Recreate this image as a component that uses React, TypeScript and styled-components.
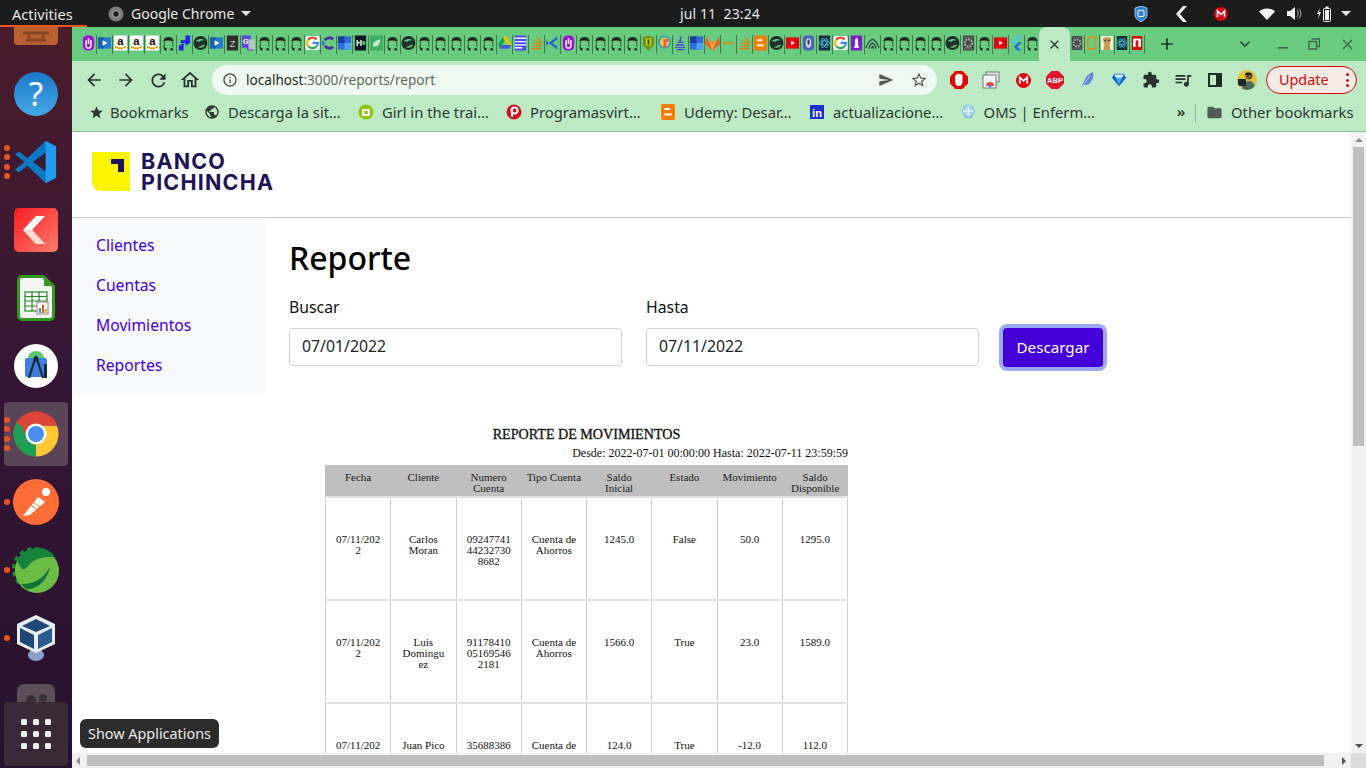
import React from 'react';
import styled, { createGlobalStyle } from 'styled-components';
import {
  MdArrowBack,
  MdArrowForward,
  MdRefresh,
  MdOutlineHome,
  MdInfoOutline,
  MdSend,
  MdStarBorder,
  MdStar,
  MdExtension,
  MdClose,
  MdAdd,
  MdExpandMore,
  MdPublic,
  MdFolder,
  MdQueueMusic,
} from 'react-icons/md';

const GlobalStyle = createGlobalStyle`
  html, body {
    margin: 0;
    padding: 0;
    height: 100%;
    overflow: hidden;
    background: #fff;
  }
  #root { height: 100%; }
  * { box-sizing: border-box; }
`;

const uiFont = `"Noto Sans", "Open Sans", sans-serif`;

const Desktop = styled.div`
  position: relative;
  width: 1366px;
  height: 768px;
  display: flex;
  flex-direction: column;
  overflow: hidden;
  font-family: ${uiFont};
`;

/* ---------- gnome top bar ---------- */

const TopBar = styled.div`
  height: 27px;
  flex: none;
  display: flex;
  align-items: center;
  background: #1c1c1c;
  color: #e6e6e6;
  font-size: 14px;
`;

const Activities = styled.div`
  width: 87px;
  height: 27px;
  padding: 2px 0 0 12px;
  display: flex;
  align-items: center;
  border-bottom: 2px solid #e95420;
  font-size: 14.6px;
`;

const AppMenu = styled.div`
  width: 593px;
  padding-left: 21px;
  display: flex;
  align-items: center;
  gap: 7px;
`;

const Caret = styled.span`
  width: 0;
  height: 0;
  border-left: 5px solid transparent;
  border-right: 5px solid transparent;
  border-top: 5px solid #e6e6e6;
`;

const Clock = styled.div`
  width: 439px;
  white-space: pre;
  letter-spacing: 0.1px;
`;

const Tray = styled.div`
  display: flex;
  align-items: center;
`;

const TraySlot = styled.div<{ $w: number; $ml?: number }>`
  width: ${(p) => p.$w}px;
  margin-left: ${(p) => p.$ml ?? 0}px;
  height: 27px;
  display: flex;
  align-items: center;
  justify-content: center;
`;

/* ---------- dock ---------- */

const Workspace = styled.div`
  flex: 1;
  min-height: 0;
  display: flex;
`;

const Dock = styled.div`
  width: 72px;
  flex: none;
  display: flex;
  flex-direction: column;
  background: linear-gradient(180deg, #4a1c2b 0%, #351634 45%, #27122d 100%);
`;

const DockClip = styled.div`
  flex: 1;
  min-height: 0;
  overflow: hidden;
`;

const DockList = styled.div`
  display: flex;
  flex-direction: column;
  margin-top: -35px;
`;

const DockItem = styled.div<{ $active?: boolean }>`
  position: relative;
  height: 64px;
  flex: none;
  margin: 2px 4px;
  display: flex;
  align-items: center;
  justify-content: center;
  border-radius: 4px;
  background: ${(p) => (p.$active ? '#5a4458' : 'transparent')};
`;

const RunDots = styled.div`
  position: absolute;
  left: 0;
  top: 0;
  bottom: 0;
  display: flex;
  flex-direction: column;
  justify-content: center;
  gap: 3.5px;
`;

const RunDot = styled.span`
  width: 6px;
  height: 6px;
  border-radius: 50%;
  background: #e95420;
`;

const ShowApps = styled.div`
  height: 64px;
  flex: none;
  margin: 0 4px 2px;
  border-radius: 4px;
  background: #3a2a38;
  display: grid;
  grid-template-columns: repeat(3, 6px);
  grid-auto-rows: 6px;
  gap: 6px;
  justify-content: center;
  align-content: center;
`;

const AppDot = styled.span`
  background: #eeeeee;
  border-radius: 1.5px;
`;

const Tooltip = styled.div`
  position: absolute;
  left: 80px;
  top: 719px;
  height: 29px;
  width: 139px;
  display: flex;
  align-items: center;
  justify-content: center;
  border-radius: 6px;
  background: #2c2c2c;
  color: #e8e8e8;
  font-size: 14.4px;
`;

/* ---------- chrome window ---------- */

const Browser = styled.div`
  flex: 1;
  min-width: 0;
  display: flex;
  flex-direction: column;
`;

const TabStrip = styled.div`
  height: 34px;
  flex: none;
  display: flex;
  align-items: stretch;
  padding-left: 8.5px;
  background: #68cb80;
  color: #26332a;
`;

const Tab = styled.div<{ $w?: number }>`
  width: ${(p) => p.$w ?? 16}px;
  flex: none;
  height: 19px;
  margin-top: 8px;
  display: flex;
  align-items: flex-start;
  justify-content: center;
  overflow: hidden;
  border-right: 1px solid #3f7d50;
`;

const ActiveTab = styled.div`
  width: 31px;
  flex: none;
  margin-left: -2px;
  border-radius: 8px 8px 0 0;
  background: #bdeac5;
  display: flex;
  align-items: center;
  justify-content: center;
`;

const StripButton = styled.div<{ $w: number; $ml?: number }>`
  width: ${(p) => p.$w}px;
  margin-left: ${(p) => p.$ml ?? 0}px;
  flex: none;
  display: flex;
  align-items: center;
  justify-content: center;
`;

const Toolbar = styled.div`
  height: 38px;
  flex: none;
  display: flex;
  align-items: flex-start;
  padding: 4px 0 0 6px;
  background: #bdeac5;
  color: #26332a;
`;

const ToolButton = styled.div<{ $w?: number }>`
  width: ${(p) => p.$w ?? 32}px;
  height: 30px;
  flex: none;
  display: flex;
  align-items: center;
  justify-content: center;
`;

const Omnibox = styled.div`
  width: 725px;
  height: 30px;
  flex: none;
  margin: 0 6px;
  display: flex;
  align-items: center;
  border-radius: 15px;
  background: #effaf1;
  padding: 0 2px 0 10px;
  font-size: 13.6px;
`;

const Url = styled.div`
  flex: 1;
  margin-left: 8px;
  padding-bottom: 2px;
  color: #5d6b62;

  b {
    font-weight: 400;
    color: #1f2a23;
  }
`;

const OmniAction = styled.div`
  width: 33px;
  display: flex;
  justify-content: center;
  color: #4d5a51;
`;

const UpdatePill = styled.div`
  width: 91px;
  height: 28px;
  flex: none;
  margin: 1px 0 0 3px;
  padding: 0 7px 2px 12px;
  display: flex;
  align-items: center;
  justify-content: space-between;
  border: 1px solid #d40c0c;
  border-radius: 14px;
  background: #f4ebe4;
  color: #d40c0c;
  font-size: 14.4px;
`;

const PillDots = styled.div`
  display: flex;
  flex-direction: column;
  gap: 2.5px;
  padding-top: 2px;
`;

const PillDot = styled.span`
  width: 3px;
  height: 3px;
  border-radius: 50%;
  background: #d40c0c;
`;

const Avatar = styled.div`
  width: 20px;
  height: 20px;
  border-radius: 50%;
  overflow: hidden;
  background: #e2c33c;
`;

const BookmarkBar = styled.div`
  height: 33px;
  flex: none;
  display: flex;
  align-items: flex-start;
  padding: 3px 0 0 17px;
  background: #bdeac5;
  border-bottom: 1px solid #8fc79c;
  color: #2d3a32;
  font-size: 14.8px;
`;

const Bookmark = styled.div<{ $w: number; $gap?: number }>`
  width: ${(p) => p.$w}px;
  height: 20px;
  flex: none;
  display: flex;
  align-items: center;
  gap: ${(p) => p.$gap ?? 8}px;
  white-space: nowrap;
`;

const BookmarkSpacer = styled.div`
  width: 75px;
  flex: none;
`;

const Chevrons = styled.div`
  width: 22px;
  height: 20px;
  flex: none;
  text-align: center;
  font-size: 15px;
  line-height: 18px;
  font-weight: 600;
`;

const BarDivider = styled.div`
  width: 1px;
  height: 18px;
  margin: 2px 10px 0 3px;
  flex: none;
  background: #93b79b;
`;

/* ---------- page inside the browser ---------- */

const Viewport = styled.div`
  flex: 1;
  min-height: 0;
  display: flex;
`;

const PageColumn = styled.div`
  flex: 1;
  min-width: 0;
  display: flex;
  flex-direction: column;
`;

const Page = styled.div`
  flex: 1;
  min-height: 0;
  overflow: hidden;
  background: #fff;
`;

const Header = styled.div`
  height: 86px;
  padding: 20px 0 0 20px;
  display: flex;
  align-items: flex-start;
  gap: 11px;
  border-bottom: 1px solid #cdcdc5;
`;

const LogoMark = styled.div`
  position: relative;
  width: 38px;
  height: 39px;
  background: #fbf600;
  border-bottom-left-radius: 9px;
`;

const LogoCorner = styled.svg`
  position: absolute;
  left: 19px;
  top: 7px;
`;

const LogoText = styled.div`
  margin-top: -1px;
  color: #1e1259;
  font-family: "Inter", ${uiFont};
  font-size: 21.5px;
  font-weight: 700;
  line-height: 21px;
  letter-spacing: 1.2px;
`;

const PageBody = styled.div`
  display: flex;
  align-items: flex-start;
`;

const Sidebar = styled.nav`
  width: 193px;
  height: 176px;
  flex: none;
  padding: 8px 0 0 24px;
  background: #f8f9fa;
`;

const NavLink = styled.a`
  display: block;
  height: 40px;
  line-height: 38px;
  color: #3f00e6;
  font-size: 15.7px;
  text-decoration: none;
`;

const Content = styled.main`
  flex: 1;
  min-width: 0;
  padding: 20px 0 0 24px;
`;

const Title = styled.h1`
  margin: 0;
  height: 40px;
  font-size: 32px;
  line-height: 40px;
  font-weight: 500;
  color: #000;
`;

const FormRow = styled.div`
  display: flex;
  align-items: flex-end;
  gap: 24px;
  margin-top: 18px;
`;

const Field = styled.div`
  width: 333px;
`;

const Label = styled.label`
  display: block;
  height: 24px;
  margin-bottom: 8px;
  font-size: 15.8px;
  line-height: 22px;
  color: #111;
`;

const DateInput = styled.input`
  display: block;
  width: 100%;
  height: 38px;
  padding: 0 12px 2px;
  border: 1px solid #ced4da;
  border-radius: 4px;
  background: #fff;
  color: #212529;
  font-family: inherit;
  font-size: 15.8px;
  outline: none;
`;

const DownloadButton = styled.button`
  width: 100px;
  height: 39px;
  margin-bottom: -1px;
  padding: 0 0 2px;
  border: none;
  border-radius: 4px;
  background: #4400d8;
  box-shadow: 0 0 0 4px #9ba9f8;
  color: #fff;
  font-family: inherit;
  font-size: 15.2px;
`;

const Report = styled.section`
  width: 523px;
  margin: 58px 0 0 36px;
  font-family: "Liberation Serif", "Times New Roman", serif;
  color: #111;
`;

const ReportTitle = styled.div`
  height: 21px;
  text-align: center;
  font-size: 14.1px;
  line-height: 20px;
  -webkit-text-stroke: 0.3px #111;
`;

const ReportRange = styled.div`
  height: 20px;
  text-align: right;
  font-size: 12px;
  line-height: 16px;
`;

const ReportTable = styled.table`
  width: 523px;
  table-layout: fixed;
  border-collapse: collapse;
  font-size: 11px;
  line-height: 11px;
  text-align: center;
`;

const HeadCell = styled.th`
  height: 32px;
  padding: 7px 4.5px 0;
  vertical-align: top;
  background: #bfbfbf;
  border-left: 1px solid #bfbfbf;
  font-weight: 400;
  color: #222;
`;

const BodyCell = styled.td`
  height: 103px;
  padding: 36px 9px 0;
  vertical-align: top;
  border: 1px solid #d0d0d0;
  border-top: 2px solid #e2e2e2;
  border-bottom: 2px solid #e2e2e2;
  overflow-wrap: anywhere;
`;

/* ---------- scrollbars ---------- */

const HScroll = styled.div`
  height: 15px;
  flex: none;
  display: flex;
  align-items: center;
  background: #f1f1f1;
  padding-left: 4px;
`;

const HThumb = styled.div`
  flex: none;
  width: 1237px;
  height: 11px;
  margin-left: 7px;
  background: #bfbfbf;
`;

const ArrowLeft = styled.span`
  width: 0;
  height: 0;
  border-top: 4px solid transparent;
  border-bottom: 4px solid transparent;
  border-right: 4px solid #8d8d8d;
`;

const ArrowRight = styled.span`
  width: 0;
  height: 0;
  margin-left: 18px;
  border-top: 4px solid transparent;
  border-bottom: 4px solid transparent;
  border-left: 4px solid #505050;
`;

const VScroll = styled.div`
  width: 15px;
  flex: none;
  display: flex;
  flex-direction: column;
  align-items: center;
  background: #f1f1f1;
`;

const ArrowUp = styled.span`
  margin-top: 6px;
  width: 0;
  height: 0;
  border-left: 4px solid transparent;
  border-right: 4px solid transparent;
  border-bottom: 4px solid #8d8d8d;
`;

const VThumb = styled.div`
  width: 11px;
  flex: 1;
  margin-top: 5px;
  background: #bfbfbf;
  max-height: 520px;
`;

const VGap = styled.div`
  flex: 1;
`;

const ArrowDown = styled.span`
  margin-bottom: 5px;
  width: 0;
  height: 0;
  border-left: 4px solid transparent;
  border-right: 4px solid transparent;
  border-top: 4px solid #505050;
`;

const Corner = styled.div`
  width: 15px;
  height: 15px;
  flex: none;
  background: #dcdcdc;
`;

/* ---------- favicons ---------- */

const Github = () => (
  <svg width="16" height="16" viewBox="0 0 16 16">
    <path d="M2.500 6C3 3 5 1.500 8 1.500S13 3 13.500 6c-3-1-8-1-11 0z" fill="#1c2a24" />
    <path d="M3.500 6v6M12.500 6v6" stroke="#2f5a3e" strokeWidth="1" />
    <path d="M2.500 10.500c.5 2 2 3 3.500 3V16H4.500C3 15.500 2.500 13 2.500 10.500zM10 13.500h3V16h-3z" fill="#1c2a24" />
  </svg>
);

const Favicon = ({ kind }: { kind: string }) => {
  switch (kind) {
    case 'gh':
      return <Github />;
    case 'u':
      return (
        <svg width="16" height="16" viewBox="0 0 16 16">
          <rect x="2" y="0" width="12" height="16" rx="5" fill="#a50be0" />
          <path d="M5.500 5v6a2.500 2.500 0 0 0 5 0V5" stroke="#fff" strokeWidth="1.600" fill="none" />
          <rect x="7.200" y="3" width="1.600" height="6" fill="#fff" />
        </svg>
      );
    case 'play':
      return (
        <svg width="16" height="16" viewBox="0 0 16 16">
          <rect x="1" y="2" width="14" height="12" fill="#2a78cf" />
          <rect x="1" y="2" width="6" height="12" fill="#1c5fae" />
          <path d="M6 5l5 3-5 3z" fill="#fff" />
        </svg>
      );
    case 'amazon':
      return (
        <svg width="16" height="16" viewBox="0 0 16 16">
          <rect x="1" y="0" width="14" height="16" fill="#fff" />
          <text x="8" y="10" textAnchor="middle" fontSize="12" fontWeight="700" fontFamily="Liberation Sans, sans-serif" fill="#111">a</text>
          <path d="M2 12c3 2 8 2 12 0" stroke="#f29a12" strokeWidth="1.800" fill="none" />
        </svg>
      );
    case 'flag':
      return (
        <svg width="16" height="16" viewBox="0 0 16 16">
          <path d="M9 0h5v5H9zM4 5h10v3l-5 3v-3H4zM2 11l5-3v8H2z" fill="#2222e8" />
        </svg>
      );
    case 'globe':
      return (
        <svg width="16" height="16" viewBox="0 0 16 16">
          <circle cx="8" cy="8" r="7.500" fill="#21302a" />
          <path d="M3 6c3-3 7-3 9-1-2 0-4 .5-5 1.500zM13 10c-2 3-6 4-8 2 3 0 4-1 5-2z" fill="#68cb80" />
        </svg>
      );
    case 'z':
      return (
        <svg width="16" height="16" viewBox="0 0 16 16">
          <rect x="2" y="0" width="12" height="16" fill="#2e2e2e" />
          <text x="8" y="12" textAnchor="middle" fontSize="10" fontFamily="Liberation Sans, sans-serif" fill="#cfcfcf">Z</text>
        </svg>
      );
    case 'translate':
      return (
        <svg width="16" height="16" viewBox="0 0 16 16">
          <path d="M1 0h9l4 16H7l-1-3H1z" fill="#5a46e8" />
          <rect x="8" y="4" width="7" height="11" fill="#b7c3bb" />
          <text x="5" y="9" textAnchor="middle" fontSize="8" fontWeight="700" fontFamily="Liberation Sans, sans-serif" fill="#fff">G</text>
        </svg>
      );
    case 'google':
      return (
        <svg width="16" height="16" viewBox="0 0 16 16">
          <rect x="0.500" y="0.500" width="15" height="15" rx="2" fill="#fff" />
          <path d="M12.500 4.200A6 6 0 0 0 3.300 4.700" stroke="#ea4335" strokeWidth="2.400" fill="none" />
          <path d="M3.300 4.700a6 6 0 0 0 0 6.600" stroke="#fbbc05" strokeWidth="2.400" fill="none" />
          <path d="M3.300 11.300A6 6 0 0 0 12.800 11" stroke="#34a853" strokeWidth="2.400" fill="none" />
          <path d="M8 7.800h5.700c0 1.300-.3 2.300-.9 3.200" stroke="#4285f4" strokeWidth="2.400" fill="none" />
        </svg>
      );
    case 'c':
      return (
        <svg width="16" height="16" viewBox="0 0 16 16">
          <path d="M13 4a6 6 0 0 0-9 1M4 11a6 6 0 0 0 9 1" stroke="#4b2fa6" strokeWidth="3" fill="none" />
          <path d="M1 5l4 3-4 3z" fill="#3b6ce0" />
        </svg>
      );
    case 'bsq':
      return (
        <svg width="16" height="16" viewBox="0 0 16 16">
          <rect x="1" y="1" width="14" height="14" fill="#2f6ae0" />
          <rect x="1" y="1" width="7" height="7" fill="#1a3f9e" />
          <rect x="8" y="8" width="7" height="7" fill="#50a0f5" />
        </svg>
      );
    case 'hn':
      return (
        <svg width="16" height="16" viewBox="0 0 16 16">
          <rect x="2" y="0" width="12" height="16" fill="#0c1322" />
          <text x="6.500" y="11" textAnchor="middle" fontSize="9" fontWeight="700" fontFamily="Liberation Sans, sans-serif" fill="#fff">H</text>
          <rect x="10" y="6" width="3" height="4" fill="#32d67c" />
        </svg>
      );
    case 'leaf':
      return (
        <svg width="16" height="16" viewBox="0 0 16 16">
          <rect x="1" y="0" width="14" height="16" fill="#3fae63" />
          <path d="M4 12c0-5 3-7 8-8 0 5-2 8-7 8" fill="#bfe8cb" />
        </svg>
      );
    case 'drive':
      return (
        <svg width="16" height="16" viewBox="0 0 16 16">
          <path d="M6 1h4l5 9h-4z" fill="#f2c200" />
          <path d="M6 1l-5 9 2 4 5-9z" fill="#17a05d" />
          <path d="M3 14l2-4h10l-2 4z" fill="#4a55e0" />
        </svg>
      );
    case 'lines':
      return (
        <svg width="16" height="16" viewBox="0 0 16 16">
          <rect x="2" y="0" width="12" height="16" fill="#4b4bf0" />
          <path d="M2 3h12M2 6.500h12M2 10h12M2 13h8" stroke="#fff" strokeWidth="1.500" />
        </svg>
      );
    case 'so':
      return (
        <svg width="16" height="16" viewBox="0 0 16 16">
          <path d="M2 14h11M3 11l9 1M4 8l8 3M6 5l7 5M9 2l5 7" stroke="#e8780c" strokeWidth="1.200" fill="none" />
        </svg>
      );
    case 'vsc':
      return (
        <svg width="16" height="16" viewBox="0 0 16 16">
          <path d="M13 1v14L4 8z" fill="#2563c9" />
          <path d="M13 4v8L8 8z" fill="#68cb80" />
          <path d="M1 5l3 3-3 3z" fill="#2563c9" />
        </svg>
      );
    case 'shield':
      return (
        <svg width="16" height="16" viewBox="0 0 16 16">
          <path d="M2 2l6-2 6 2v8l-6 6-6-6z" fill="#6f8f0f" />
          <rect x="5" y="3" width="6" height="8" fill="#c9cf16" />
          <rect x="7" y="4" width="2" height="6" fill="#2f5d12" />
        </svg>
      );
    case 'colour':
      return (
        <svg width="16" height="16" viewBox="0 0 16 16">
          <circle cx="8" cy="7" r="6" stroke="#2fa7b8" strokeWidth="2" fill="#f2c94c" />
          <path d="M7 4h5v3h-2v6H7z" fill="#e9603a" />
        </svg>
      );
    case 'java':
      return (
        <svg width="16" height="16" viewBox="0 0 16 16">
          <path d="M3 10h9M2 12.500h11M4 15h8" stroke="#3d3dd8" strokeWidth="1.200" />
          <path d="M8 1c2 2-2 3 0 6M5 7h6" stroke="#3d3dd8" strokeWidth="1.400" fill="none" />
        </svg>
      );
    case 'fox':
      return (
        <svg width="16" height="16" viewBox="0 0 16 16">
          <path d="M1 1l3 5h8l3-5 1 8-8 7-8-7z" fill="#e8622a" />
          <path d="M4 6h8l-4 10z" fill="#f7a23a" />
        </svg>
      );
    case 'dash':
      return (
        <svg width="16" height="16" viewBox="0 0 16 16">
          <rect x="2" y="7" width="12" height="2" fill="#d98a1c" />
        </svg>
      );
    case 'blogger':
      return (
        <svg width="16" height="16" viewBox="0 0 16 16">
          <rect x="1" y="0" width="14" height="16" rx="2" fill="#f57d00" />
          <path d="M5 5h4M5 10.500h6" stroke="#fff" strokeWidth="2" strokeLinecap="round" />
        </svg>
      );
    case 'yt':
      return (
        <svg width="16" height="16" viewBox="0 0 16 16">
          <rect x="1" y="2" width="14" height="12" fill="#e4000f" />
          <path d="M6.500 5.500l4 2.500-4 2.500z" fill="#fff" />
        </svg>
      );
    case 'penguin':
      return (
        <svg width="16" height="16" viewBox="0 0 16 16">
          <rect x="2" y="0" width="12" height="16" rx="4" fill="#4a63b5" />
          <ellipse cx="8" cy="8" rx="3" ry="5" fill="#d3d8e0" />
          <ellipse cx="8" cy="7" rx="1.200" ry="3" fill="#2c3560" />
        </svg>
      );
    case 'react':
      return (
        <svg width="16" height="16" viewBox="0 0 16 16">
          <rect x="2" y="0" width="12" height="16" fill="#14303a" />
          <g stroke="#4bb8e0" strokeWidth="0.900" fill="none">
            <ellipse cx="8" cy="8" rx="5.500" ry="2.200" />
            <ellipse cx="8" cy="8" rx="5.500" ry="2.200" transform="rotate(60 8 8)" />
            <ellipse cx="8" cy="8" rx="5.500" ry="2.200" transform="rotate(120 8 8)" />
          </g>
        </svg>
      );
    case 'rocket':
      return (
        <svg width="16" height="16" viewBox="0 0 16 16">
          <rect x="2" y="0" width="12" height="16" fill="#7a1fc8" />
          <path d="M8 2c2 2 2 5 1.500 8h-3C6 7 6 4 8 2zM5 13l1.500-3h3L11 13z" fill="#fff" />
        </svg>
      );
    case 'wifi':
      return (
        <svg width="16" height="16" viewBox="0 0 16 16">
          <path d="M1 13c2-5 4-8 7-9 3 1 5 4 7 9M4 14c1-3 2-5 4-6 2 1 3 3 4 6M7 14c0-1 .5-2 1-2.500.5.500 1 1.500 1 2.500" stroke="#21302a" strokeWidth="1.100" fill="none" />
        </svg>
      );
    case 'gray':
      return (
        <svg width="16" height="16" viewBox="0 0 16 16">
          <rect x="2" y="0" width="12" height="16" fill="#4a4a4a" />
          <circle cx="8" cy="8" r="4" fill="none" stroke="#a8a8a8" strokeWidth="2" strokeDasharray="2 1" />
          <path d="M3 2h10M3 14h10" stroke="#8a8a8a" strokeWidth="1" strokeDasharray="1 1" />
        </svg>
      );
    case 'flutter':
      return (
        <svg width="16" height="16" viewBox="0 0 16 16">
          <path d="M10 0h4L5 9 3 7z" fill="#46c4f0" />
          <path d="M10 7h4l-5 5 4 4H9L5 12z" fill="#1d72d8" />
        </svg>
      );
    case 'outline':
      return (
        <svg width="16" height="16" viewBox="0 0 16 16">
          <rect x="3" y="1.500" width="9" height="13" rx="1.500" fill="none" stroke="#f28a0c" strokeWidth="1.800" />
        </svg>
      );
    case 'meerkat':
      return (
        <svg width="16" height="16" viewBox="0 0 16 16">
          <rect x="1" y="0" width="14" height="16" fill="#f3ecd4" />
          <path d="M3 3c3-2 7-2 10 0l-2 7 1 6H4l1-6z" fill="#c89a55" />
          <circle cx="6" cy="5" r="1" fill="#222" />
          <circle cx="10" cy="5" r="1" fill="#222" />
        </svg>
      );
    case 'ired':
      return (
        <svg width="16" height="16" viewBox="0 0 16 16">
          <rect x="2" y="0" width="12" height="16" fill="#d20f0f" />
          <rect x="3.500" y="3" width="9" height="9.500" fill="#fff" />
          <rect x="6.500" y="5" width="3" height="7.500" fill="#d20f0f" />
        </svg>
      );
    default:
      return null;
  }
};

const gh = (n: number) => Array.from({ length: n }, () => 'gh');

const leftTabs: string[] = [
  'u', 'play', 'amazon', 'amazon', 'amazon', 'gh', 'flag', 'globe', 'play', 'z', 'translate',
  ...gh(3), 'google', 'c', 'bsq', 'hn', 'leaf', 'gh', 'globe', ...gh(5), 'drive', 'lines', 'so',
  'vsc', 'u', ...gh(4), 'shield', 'colour', 'java', 'bsq', 'fox', 'dash', 'so', 'blogger', 'globe',
  'yt', 'penguin', 'react', 'google', 'rocket', 'wifi', ...gh(4), 'globe', 'gray', 'gh', 'yt',
  'flutter', 'gh',
];

const rightTabs = ['gray', 'outline', 'meerkat', 'react', 'ired'];

/* ---------- dock icons ---------- */

const HelpIcon = () => (
  <svg width="46" height="46" viewBox="0 0 46 46">
    <defs>
      <linearGradient id="helpBg" x1="0" y1="0" x2="0" y2="1">
        <stop offset="0" stopColor="#1b77c9" />
        <stop offset="1" stopColor="#45a9e6" />
      </linearGradient>
    </defs>
    <circle cx="23" cy="23" r="22" fill="url(#helpBg)" />
    <text x="23" y="35" textAnchor="middle" fontSize="33" fontFamily="Noto Sans, sans-serif" fill="#fff">?</text>
  </svg>
);

const CutTopIcon = () => (
  <svg width="44" height="38" viewBox="0 0 44 38">
    <rect width="44" height="38" rx="4" fill="#b8602f" />
    <path d="M9 26h26M15 28v5M29 28v5M12 33h20" stroke="#8a4522" strokeWidth="3" fill="none" />
  </svg>
);

const VsCodeIcon = () => (
  <svg width="46" height="44" viewBox="0 0 46 46">
    <path d="M33 1l11 5.500v33L33 45 14 27 5 34l-4-3 10-8L1 15l4-3 9 7z" fill="#0a78c4" />
    <path d="M33 1l11 5.500v33L33 45z" fill="#1f9cf0" />
    <path d="M33 13v20L20 23z" fill="#3a1a33" />
  </svg>
);

const KiteIcon = () => (
  <svg width="44" height="44" viewBox="0 0 44 44">
    <defs>
      <linearGradient id="kiteBg" x1="0" y1="0" x2="1" y2="1">
        <stop offset="0" stopColor="#f81c22" />
        <stop offset="1" stopColor="#ff7c6c" />
      </linearGradient>
    </defs>
    <rect width="44" height="44" rx="5" fill="url(#kiteBg)" />
    <path d="M31 8h-9L9 22l13 14h9L18 22z" fill="#fff" />
    <path d="M18 22l13 14h-9L9 22z" fill="#ffd9cf" />
  </svg>
);

const CalcIcon = () => (
  <svg width="38" height="46" viewBox="0 0 38 46">
    <path d="M5 1.500h21l10.500 10V41a3.500 3.500 0 0 1-3.500 3.500H5A3.500 3.500 0 0 1 1.500 41V5A3.500 3.500 0 0 1 5 1.500z" fill="#f4f4f4" stroke="#2f9a1d" strokeWidth="3" />
    <path d="M27 0l11 11H27z" fill="#2f9a1d" />
    <g stroke="#1f8a1f" strokeWidth="1.200" fill="#fff">
      <rect x="8" y="17" width="22" height="19" />
      <path d="M8 21.500h22M8 26h22M8 31h22M15 17v19M22 17v19" />
    </g>
    <rect x="20" y="27" width="11" height="12" fill="#fff" stroke="#888" />
    <rect x="22" y="33" width="2" height="5" fill="#3a8fd8" />
    <rect x="25" y="30" width="2" height="8" fill="#e8541e" />
    <rect x="28" y="34" width="2" height="4" fill="#f0b018" />
  </svg>
);

const StudioIcon = () => (
  <svg width="44" height="44" viewBox="0 0 44 44">
    <circle cx="22" cy="22" r="22" fill="#fff" />
    <path d="M14 14a8 7 0 0 1 16 0z" fill="#5fc46e" />
    <rect x="11" y="14" width="22" height="19" rx="2" fill="#3f7fdc" />
    <path d="M22 12l-7 22M22 12l7 22" stroke="#0f2a3a" strokeWidth="2.200" />
    <circle cx="22" cy="15" r="2.500" fill="#0f2a3a" />
    <rect x="30" y="20" width="3" height="14" fill="#0f2a3a" />
  </svg>
);

const ChromeIcon = () => (
  <svg width="46" height="46" viewBox="0 0 46 46">
    <circle cx="23" cy="23" r="22.500" fill="#e04a3a" />
    <path d="M23 23L3.500 34A22.500 22.500 0 0 0 23 45.500z" fill="#1e9e52" />
    <path d="M23 23L3.500 34A22.500 22.500 0 0 1 3.500 12z" fill="#1e9e52" />
    <path d="M23 23v22.500A22.500 22.500 0 0 0 44 15H23z" fill="#fcc934" />
    <path d="M23 12.500h20.500A22.500 22.500 0 0 0 5 10.500l9 14z" fill="#dc4437" />
    <circle cx="23" cy="23" r="10.500" fill="#fff" />
    <circle cx="23" cy="23" r="8" fill="#4a8df0" />
  </svg>
);

const PostmanIcon = () => (
  <svg width="46" height="46" viewBox="0 0 46 46">
    <circle cx="23" cy="23" r="23" fill="#ff6c37" />
    <path d="M10 37l15-19 7 5-15 13z" fill="#fff" />
    <path d="M18 26l8 6M20 23l8 6" stroke="#ff6c37" strokeWidth="1" />
    <circle cx="33" cy="13" r="4" fill="#fff" />
  </svg>
);

const SpringIcon = () => (
  <svg width="48" height="48" viewBox="0 0 48 48">
    <circle cx="22" cy="23" r="19" fill="#1f8a3a" stroke="#1f8a3a" strokeWidth="6" strokeDasharray="4 3.500" />
    <circle cx="25" cy="25" r="22" fill="#6cbd45" />
    <path d="M5 15A22 22 0 0 1 43 11c-8 0-18 0-24 6-3 3-5 7-9 6z" fill="#178239" />
    <path d="M9 38c10 1 22-4 29-17-3 14-13 23-24 22z" fill="#14713a" />
  </svg>
);

const VBoxIcon = () => (
  <svg width="44" height="48" viewBox="0 0 44 48">
    <ellipse cx="22" cy="41" rx="8" ry="6" fill="#8aa0c8" />
    <path d="M22 1l19 9v20l-19 9-19-9V10z" fill="#e8edf5" />
    <path d="M22 5l14 7-14 6-14-6z" fill="#1f4876" />
    <path d="M6 14l14 7v14L6 28z" fill="#1f4876" />
    <path d="M38 14L24 21v14l14-7z" fill="#2a5a8e" />
  </svg>
);

const NextCutIcon = () => (
  <svg width="38" height="44" viewBox="0 0 38 44">
    <rect width="38" height="44" rx="7" fill="#5c5058" />
    <circle cx="14" cy="16" r="5" fill="#3a3038" />
    <circle cx="26" cy="14" r="4" fill="#3a3038" />
  </svg>
);

const dockItems: { id: string; icon: React.ReactNode; dots?: number; active?: boolean }[] = [
  { id: 'cut', icon: <CutTopIcon /> },
  { id: 'help', icon: <HelpIcon /> },
  { id: 'code', icon: <VsCodeIcon />, dots: 4 },
  { id: 'kite', icon: <KiteIcon /> },
  { id: 'calc', icon: <CalcIcon /> },
  { id: 'studio', icon: <StudioIcon /> },
  { id: 'chrome', icon: <ChromeIcon />, dots: 4, active: true },
  { id: 'postman', icon: <PostmanIcon />, dots: 1 },
  { id: 'spring', icon: <SpringIcon />, dots: 1 },
  { id: 'vbox', icon: <VBoxIcon />, dots: 1 },
  { id: 'next', icon: <NextCutIcon /> },
];

/* ---------- bookmark and toolbar glyphs ---------- */

const LimeFav = () => (
  <svg width="16" height="16" viewBox="0 0 16 16">
    <circle cx="8" cy="8" r="7.500" fill="#8cc406" />
    <rect x="4" y="5" width="8" height="7" rx="1" fill="#fff" />
    <circle cx="8" cy="8.500" r="2" fill="#8cc406" />
  </svg>
);

const RedFav = () => (
  <svg width="16" height="16" viewBox="0 0 16 16">
    <circle cx="8" cy="8" r="7.500" fill="#d4101c" />
    <circle cx="8.500" cy="6.500" r="3" fill="none" stroke="#fff" strokeWidth="2" />
    <rect x="5" y="6" width="2" height="7" fill="#fff" />
  </svg>
);

const LinkedinFav = () => (
  <svg width="16" height="16" viewBox="0 0 16 16">
    <rect x="1" y="1" width="14" height="14" fill="#1c2fd0" />
    <text x="8" y="13" textAnchor="middle" fontSize="11" fontWeight="700" fontFamily="Liberation Sans, sans-serif" fill="#fff">in</text>
  </svg>
);

const WhoFav = () => (
  <svg width="16" height="16" viewBox="0 0 16 16">
    <circle cx="8" cy="7" r="6.500" fill="#a9d8ee" stroke="#6cb6dc" />
    <path d="M8 1v12M2 7h12" stroke="#fff" strokeWidth="1" />
    <path d="M3 12c2 3 8 3 10 0" stroke="#6cb6dc" strokeWidth="1.200" fill="none" />
  </svg>
);

const StopExt = () => (
  <svg width="18" height="18" viewBox="0 0 18 18">
    <path d="M5.500 0h7L18 5.500v7L12.500 18h-7L0 12.500v-7z" fill="#e60000" />
    <path d="M5 10V5a1 1 0 0 1 1.500-.8V3.500a1 1 0 0 1 2 0 1 1 0 0 1 2 .5 1 1 0 0 1 2 .5V11c0 2-1.500 4-4 4-2.500 0-3.500-2-3.500-5z" fill="#fff" />
  </svg>
);

const CastExt = () => (
  <svg width="18" height="18" viewBox="0 0 18 18">
    <rect x="4" y="1" width="13" height="10" fill="#e4e8e4" stroke="#777" />
    <rect x="1" y="4" width="13" height="13" fill="#f4f4f4" stroke="#777" />
    <path d="M4 15a4 4 0 0 1 8 0z" fill="#e04a3a" />
    <circle cx="8" cy="15" r="1.500" fill="#3a7fe8" />
  </svg>
);

const MegaExt = ({ size }: { size: number }) => (
  <svg width={size} height={size} viewBox="0 0 16 16">
    <circle cx="8" cy="8" r="8" fill="#e0000f" />
    <path d="M4 11.500V4.500l4 4 4-4v7" stroke="#fff" strokeWidth="1.800" fill="none" />
  </svg>
);

const AbpExt = () => (
  <svg width="18" height="18" viewBox="0 0 18 18">
    <path d="M5.500 0h7L18 5.500v7L12.500 18h-7L0 12.500v-7z" fill="#e8112d" />
    <text x="9" y="12" textAnchor="middle" fontSize="7.500" fontWeight="700" fontFamily="Liberation Sans, sans-serif" fill="#fff">ABP</text>
  </svg>
);

const FeatherExt = () => (
  <svg width="16" height="18" viewBox="0 0 16 18">
    <path d="M2 17L6 8c2-4 5-6 8-7 1 4 0 8-3 11-2 2-4 2-6 2z" fill="#5f88d8" />
    <path d="M3 16L11 5" stroke="#c4d4ee" strokeWidth="0.800" />
  </svg>
);

const DiamondExt = () => (
  <svg width="14" height="16" viewBox="0 0 18 16">
    <path d="M3 0h12l3 5-9 11L0 5z" fill="#0f5fd0" />
    <path d="M5 5h8l-4 9z" fill="#43b4f5" />
    <path d="M3 1h12l-2 4H5z" fill="#d8f0ff" />
  </svg>
);

const SidePanelGlyph = () => (
  <svg width="14" height="14" viewBox="0 0 14 14">
    <path d="M0 0h14v14H0zM2 2v10h6V2z" fill="#1f2a23" fillRule="evenodd" />
  </svg>
);

const AvatarGlyph = () => (
  <svg width="20" height="20" viewBox="0 0 20 20">
    <circle cx="12" cy="6" r="3.500" fill="#7a5230" />
    <path d="M8 4c1-2 6-2 7 1l-7 0z" fill="#1f1f1f" />
    <path d="M5 20c0-6 3-9 7-9s6 3 6 9z" fill="#4a6a5c" />
    <rect x="1" y="9" width="8" height="7" fill="#1f2a30" />
  </svg>
);

const MinimizeGlyph = () => (
  <svg width="12" height="12" viewBox="0 0 12 12">
    <rect x="1" y="9" width="10" height="1.600" fill="#3f6b4c" />
  </svg>
);

const RestoreGlyph = () => (
  <svg width="12" height="12" viewBox="0 0 12 12">
    <path d="M3.500 1h8v7.500h-2.500M1 3.500h7.500V11H1z" stroke="#3f6b4c" strokeWidth="1.500" fill="none" />
  </svg>
);

const ChromeSmall = () => (
  <svg width="16" height="16" viewBox="0 0 16 16">
    <circle cx="8" cy="8" r="7.500" fill="#7d7d7d" />
    <circle cx="8" cy="8" r="3.400" fill="#1c1c1c" stroke="#bcbcbc" />
  </svg>
);

const ShieldTray = () => (
  <svg width="14" height="16" viewBox="0 0 14 16">
    <path d="M1 2l6-2 6 2v7c0 3-3 5-6 7-3-2-6-4-6-7z" fill="#2f86d8" stroke="#bcd9f2" strokeWidth="0.800" />
    <rect x="4" y="4.500" width="6" height="6" rx="1" fill="none" stroke="#fff" />
  </svg>
);

const KiteTray = () => (
  <svg width="14" height="16" viewBox="0 0 14 16">
    <path d="M12 0H8L1 8l7 8h4L5 8z" fill="#f4f4f4" />
  </svg>
);

const WifiTray = () => (
  <svg width="16" height="12" viewBox="0 0 16 12">
    <path d="M0 3.500C4-.5 12-.5 16 3.500L8 12z" fill="#f2f2f2" />
  </svg>
);

const VolumeTray = () => (
  <svg width="15" height="13" viewBox="0 0 15 13">
    <path d="M0 4h3l5-4v13l-5-4H0z" fill="#f2f2f2" />
    <path d="M10 3c1.500 2 1.500 5 0 7M12 1.500c2.500 3 2.500 7 0 10" stroke="#aaa" fill="none" />
  </svg>
);

const BatteryTray = () => (
  <svg width="16" height="16" viewBox="0 0 16 16">
    <path d="M4 2L1 8h2L2 13l3-7H3z" fill="#f2f2f2" />
    <rect x="7.500" y="2.500" width="7" height="13" rx="1" fill="none" stroke="#f2f2f2" />
    <rect x="9" y="4" width="4" height="10" fill="#f2f2f2" />
    <rect x="9.500" y="0.500" width="3" height="2" fill="#f2f2f2" />
  </svg>
);

const rows = [
  ['07/11/2022', 'Carlos Moran', '09247741442327308682', 'Cuenta de Ahorros', '1245.0', 'False', '50.0', '1295.0'],
  ['07/11/2022', 'Luis Dominguez', '91178410051695462181', 'Cuenta de Ahorros', '1566.0', 'True', '23.0', '1589.0'],
  ['07/11/2022', 'Juan Pico', '35688386914839014823', 'Cuenta de Ahorros', '124.0', 'True', '-12.0', '112.0'],
];

const heads = ['Fecha', 'Cliente', 'Numero Cuenta', 'Tipo Cuenta', 'Saldo Inicial', 'Estado', 'Movimiento', 'Saldo Disponible'];

export default function App() {
  return (
    <Desktop>
      <GlobalStyle />
      <TopBar>
        <Activities>Activities</Activities>
        <AppMenu>
          <ChromeSmall />
          Google Chrome
          <Caret />
        </AppMenu>
        <Clock>{'jul 11  23:24'}</Clock>
        <Tray>
          <TraySlot $w={44}><ShieldTray /></TraySlot>
          <TraySlot $w={38}><KiteTray /></TraySlot>
          <TraySlot $w={40}><MegaExt size={14} /></TraySlot>
          <TraySlot $w={28} $ml={12}><WifiTray /></TraySlot>
          <TraySlot $w={26}><VolumeTray /></TraySlot>
          <TraySlot $w={34}><BatteryTray /></TraySlot>
          <TraySlot $w={10}><Caret /></TraySlot>
        </Tray>
      </TopBar>

      <Workspace>
        <Dock>
          <DockClip>
            <DockList>
              {dockItems.map((d) => (
                <DockItem key={d.id} $active={d.active}>
                  {d.dots ? (
                    <RunDots>
                      {Array.from({ length: d.dots }, (_, i) => <RunDot key={i} />)}
                    </RunDots>
                  ) : null}
                  {d.icon}
                </DockItem>
              ))}
            </DockList>
          </DockClip>
          <ShowApps>
            {Array.from({ length: 9 }, (_, i) => <AppDot key={i} />)}
          </ShowApps>
        </Dock>

        <Browser>
          <TabStrip>
            {leftTabs.map((k, i) => (
              <Tab key={i}><Favicon kind={k} /></Tab>
            ))}
            <ActiveTab><MdClose size={15} /></ActiveTab>
            {rightTabs.map((k, i) => (
              <Tab key={i} $w={15}><Favicon kind={k} /></Tab>
            ))}
            <StripButton $w={30} $ml={7}><MdAdd size={20} /></StripButton>
            <StripButton $w={20} $ml={53}><MdExpandMore size={20} color="#2d4a36" /></StripButton>
            <StripButton $w={20} $ml={18}><MinimizeGlyph /></StripButton>
            <StripButton $w={20} $ml={11}><RestoreGlyph /></StripButton>
            <StripButton $w={20} $ml={14}><MdClose size={17} color="#3f6b4c" /></StripButton>
          </TabStrip>

          <Toolbar>
            <ToolButton><MdArrowBack size={20} /></ToolButton>
            <ToolButton><MdArrowForward size={20} /></ToolButton>
            <ToolButton><MdRefresh size={21} /></ToolButton>
            <ToolButton><MdOutlineHome size={22} /></ToolButton>
            <Omnibox>
              <MdInfoOutline size={16} color="#46534a" />
              <Url><b>localhost</b>:3000/reports/report</Url>
              <OmniAction><MdSend size={16} /></OmniAction>
              <OmniAction><MdStarBorder size={18} /></OmniAction>
            </Omnibox>
            <ToolButton><StopExt /></ToolButton>
            <ToolButton><CastExt /></ToolButton>
            <ToolButton><MegaExt size={15} /></ToolButton>
            <ToolButton><AbpExt /></ToolButton>
            <ToolButton><FeatherExt /></ToolButton>
            <ToolButton><DiamondExt /></ToolButton>
            <ToolButton><MdExtension size={18} /></ToolButton>
            <ToolButton><MdQueueMusic size={20} /></ToolButton>
            <ToolButton><SidePanelGlyph /></ToolButton>
            <ToolButton><Avatar><AvatarGlyph /></Avatar></ToolButton>
            <UpdatePill>
              Update
              <PillDots><PillDot /><PillDot /><PillDot /></PillDots>
            </UpdatePill>
          </Toolbar>

          <BookmarkBar>
            <Bookmark $w={115} $gap={6}><MdStar size={15} />Bookmarks</Bookmark>
            <Bookmark $w={154}><MdPublic size={16} />Descarga la sit…</Bookmark>
            <Bookmark $w={148}><LimeFav />Girl in the trai…</Bookmark>
            <Bookmark $w={154}><RedFav />Programasvirt…</Bookmark>
            <Bookmark $w={149}><Favicon kind="blogger" />Udemy: Desar…</Bookmark>
            <Bookmark $w={152}><LinkedinFav />actualizacione…</Bookmark>
            <Bookmark $w={134}><WhoFav />OMS | Enferm…</Bookmark>
            <BookmarkSpacer />
            <Chevrons>»</Chevrons>
            <BarDivider />
            <Bookmark $w={150}><MdFolder size={17} color="#4f5a53" />Other bookmarks</Bookmark>
          </BookmarkBar>

          <Viewport>
            <PageColumn>
              <Page>
                <Header>
                  <LogoMark>
                    <LogoCorner width="13" height="13" viewBox="0 0 13 13">
                      <path d="M0 0h13v13H7V5H0z" fill="#1e1259" />
                    </LogoCorner>
                  </LogoMark>
                  <LogoText>BANCO<br />PICHINCHA</LogoText>
                </Header>
                <PageBody>
                  <Sidebar>
                    <NavLink>Clientes</NavLink>
                    <NavLink>Cuentas</NavLink>
                    <NavLink>Movimientos</NavLink>
                    <NavLink>Reportes</NavLink>
                  </Sidebar>
                  <Content>
                    <Title>Reporte</Title>
                    <FormRow>
                      <Field>
                        <Label>Buscar</Label>
                        <DateInput readOnly value="07/01/2022" />
                      </Field>
                      <Field>
                        <Label>Hasta</Label>
                        <DateInput readOnly value="07/11/2022" />
                      </Field>
                      <DownloadButton>Descargar</DownloadButton>
                    </FormRow>
                    <Report>
                      <ReportTitle>REPORTE DE MOVIMIENTOS</ReportTitle>
                      <ReportRange>Desde: 2022-07-01 00:00:00 Hasta: 2022-07-11 23:59:59</ReportRange>
                      <ReportTable>
                        <thead>
                          <tr>{heads.map((h) => <HeadCell key={h}>{h}</HeadCell>)}</tr>
                        </thead>
                        <tbody>
                          {rows.map((r) => (
                            <tr key={r[2]}>
                              {r.map((c, i) => <BodyCell key={i}>{c}</BodyCell>)}
                            </tr>
                          ))}
                        </tbody>
                      </ReportTable>
                    </Report>
                  </Content>
                </PageBody>
              </Page>
              <HScroll>
                <ArrowLeft />
                <HThumb />
                <ArrowRight />
              </HScroll>
            </PageColumn>
            <VScroll>
              <ArrowUp />
              <VThumb />
              <VGap />
              <ArrowDown />
              <Corner />
            </VScroll>
          </Viewport>
        </Browser>
      </Workspace>
      <Tooltip>Show Applications</Tooltip>
    </Desktop>
  );
}
